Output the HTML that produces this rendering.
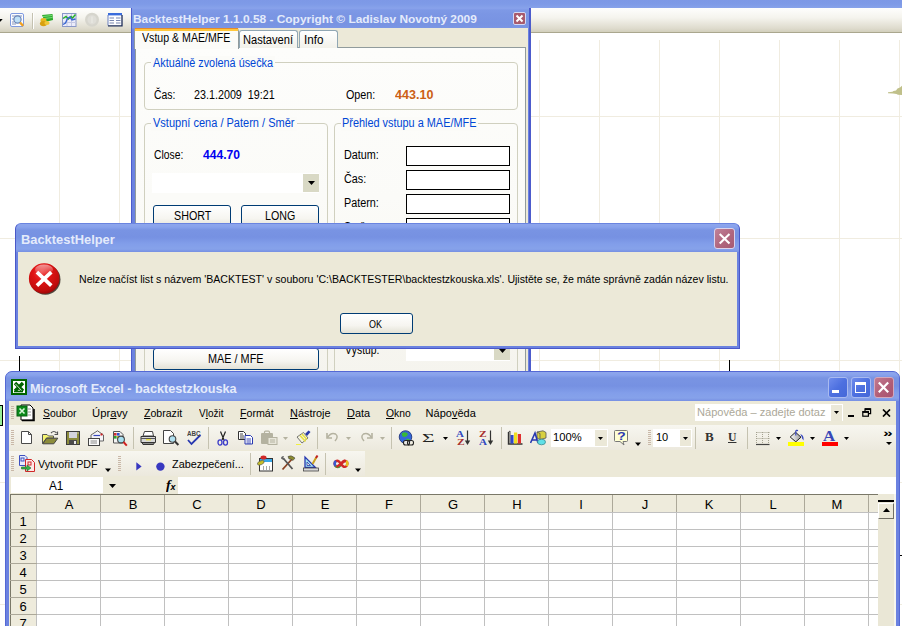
<!DOCTYPE html><html><head><meta charset="utf-8"><title>BacktestHelper</title><style>
html,body{margin:0;padding:0;background:#fff;}
#root{position:relative;width:902px;height:626px;overflow:hidden;background:#fff;}
#root div,#root span,#root svg{position:absolute;box-sizing:border-box;}
.layer{left:0;top:0;width:902px;height:626px;}
span.t{white-space:nowrap;transform-origin:0 0;display:block;}

</style></head><body><div id="root">
<div class="layer" id="L_bg">
<div style="left:0px;top:0px;width:902px;height:8px;background:linear-gradient(#7d98e6,#7e9ae7 50%,#87a2ea)"></div>
<div style="left:0px;top:8px;width:902px;height:25px;background:linear-gradient(#fefefd 0%,#f5f4ee 40%,#dedbcd 85%,#d2cfbc 100%);border-bottom:1px solid #aaa78e"></div>
<div style="left:59px;top:40px;width:1px;height:340px;background:#f0ece0"></div>
<div style="left:119px;top:40px;width:1px;height:340px;background:#f0ece0"></div>
<div style="left:179px;top:40px;width:1px;height:340px;background:#f0ece0"></div>
<div style="left:239px;top:40px;width:1px;height:340px;background:#f0ece0"></div>
<div style="left:299px;top:40px;width:1px;height:340px;background:#f0ece0"></div>
<div style="left:359px;top:40px;width:1px;height:340px;background:#f0ece0"></div>
<div style="left:419px;top:40px;width:1px;height:340px;background:#f0ece0"></div>
<div style="left:479px;top:40px;width:1px;height:340px;background:#f0ece0"></div>
<div style="left:539px;top:40px;width:1px;height:340px;background:#f0ece0"></div>
<div style="left:599px;top:40px;width:1px;height:340px;background:#f0ece0"></div>
<div style="left:659px;top:40px;width:1px;height:340px;background:#f0ece0"></div>
<div style="left:719px;top:40px;width:1px;height:340px;background:#f0ece0"></div>
<div style="left:779px;top:40px;width:1px;height:340px;background:#f0ece0"></div>
<div style="left:839px;top:40px;width:1px;height:340px;background:#f0ece0"></div>
<div style="left:899px;top:40px;width:1px;height:340px;background:#f0ece0"></div>
<div style="left:959px;top:40px;width:1px;height:340px;background:#f0ece0"></div>
<div style="left:0px;top:116px;width:902px;height:1px;background:#f0ece0"></div>
<div style="left:0px;top:238px;width:902px;height:1px;background:#f0ece0"></div>
<div style="left:0px;top:360px;width:902px;height:1px;background:#f0ece0"></div>
<div style="left:0px;top:482px;width:902px;height:1px;background:#f0ece0"></div>
<div style="left:0px;top:604px;width:902px;height:1px;background:#f0ece0"></div>
<div style="left:19px;top:356px;width:1px;height:16px;background:#000"></div>
<div style="left:729px;top:360px;width:1px;height:12px;background:#000"></div>
<div style="left:0px;top:405px;width:3px;height:21px;background:#98f098;border:1px solid #000;border-left:none"></div>
<div style="left:900px;top:555px;width:2px;height:1px;background:#000"></div>
<svg style="left:0px;top:18px" width="4" height="4" viewBox="0 0 4 4"><path d="M0 1H2.6L0.6 3.4H0Z" fill="#000"/></svg>
<svg style="left:10px;top:13px" width="15" height="15" viewBox="0 0 15 15"><rect x="0.5" y="0.5" width="13" height="13" rx="1.5" fill="#fdfdff" stroke="#7f9ae0"/>
<path d="M2 3H12M2 6H4M2 9H4M2 11H6" stroke="#8894b8" stroke-width="1"/>
<circle cx="7.5" cy="6.5" r="3.6" fill="#bfe0f6" stroke="#6a86b8" stroke-width="1.2"/>
<path d="M10 9.5L13.2 12.8" stroke="#f0a020" stroke-width="2.4"/></svg>
<div style="left:32px;top:13px;width:1px;height:16px;background:#c4c1b0"></div>
<div style="left:33px;top:13px;width:1px;height:16px;background:#fff"></div>
<svg style="left:39px;top:13px" width="15" height="15" viewBox="0 0 15 15"><path d="M3 2L13.5 1L14 7L6 9Z" fill="#2aa82a"/><path d="M4 3.5L13 2.5M5 5.5L13.5 4.5" stroke="#7ae07a" stroke-width="1"/>
<ellipse cx="4.5" cy="7.5" rx="3" ry="2.4" fill="#e8b820"/><ellipse cx="4.5" cy="10.6" rx="3.6" ry="2.6" fill="#d8a010"/><ellipse cx="8" cy="10" rx="2.6" ry="2" fill="#f0c838"/></svg>
<svg style="left:62px;top:13px" width="15" height="14" viewBox="0 0 15 14"><rect x="0.5" y="0.5" width="13.5" height="13" fill="#ececfa" stroke="#8a98c8"/>
<path d="M5 1V13M9.5 1V13M1 5H14M1 9.5H14" stroke="#c4c8e4" stroke-width="1"/>
<path d="M1 5.5L4 3.5L6.5 6L9 3.5L10.5 5L13.5 1.5" stroke="#28b028" stroke-width="1.5" fill="none"/>
<path d="M1 11.5L3.5 10L5.5 5.5L8 4L10 7L13.5 6" stroke="#3a68d0" stroke-width="1.4" fill="none"/></svg>
<svg style="left:84px;top:12px" width="16" height="16" viewBox="0 0 16 16"><circle cx="8" cy="7.8" r="7" fill="#d6d5cd"/><circle cx="8" cy="7.8" r="4.6" fill="#dfded8"/><path d="M8 4.5V11" stroke="#e9e8e3" stroke-width="1.4"/></svg>
<svg style="left:107px;top:13px" width="16" height="14" viewBox="0 0 16 14"><rect x="1" y="0.5" width="14" height="12.5" fill="#fdfdff"/><rect x="1" y="0" width="14" height="2.4" fill="#3a6cdc"/>
<path d="M1 2V12.5" stroke="#6a80c0" stroke-width="1" fill="none"/><path d="M1 12.8H15V2" stroke="#1c2c58" stroke-width="1.3" fill="none"/>
<path d="M2.5 5H7M9 5H13.5M2.5 7.5H7M9 7.5H13.5M2.5 10H7M9 10H13.5" stroke="#7a88b0" stroke-width="1.2"/></svg>
<svg style="left:887px;top:85px" width="15" height="11" viewBox="0 0 15 11"><path d="M1 7.3L5.5 6.8L6.5 6L9 5.5L10.5 3.6L13 2.6L15 0.8V10L11 9.8L9.5 9L6 8.6L1 8.2Z" fill="#c0c08a"/></svg>
</div>
<div class="layer" id="L_bth">
<div style="left:131px;top:8px;width:400px;height:372px;background:linear-gradient(#8aa3ec 0px,#7e99e6 2px,#7b96e4 6px,#7893e2 16px,#7b96e4 20px,#6b82e0 21px,#6b82e0 400px);border-left:1px solid #4c5ccc;border-right:2px solid #4c5ccc"></div>
<div style="left:513px;top:12px;width:13px;height:13px;background:#a85a6c;border:1px solid #d4d9f4;border-radius:2px"></div>
<svg style="left:513px;top:12px" width="13" height="13" viewBox="0 0 13 13"><path d="M3.5 3.5L9.5 9.5M9.5 3.5L3.5 9.5" stroke="#fff" stroke-width="2"/></svg>
<div style="left:135px;top:28px;width:393px;height:352px;background:#ece9d8"></div>
<div style="left:135px;top:47px;width:391px;height:340px;background:linear-gradient(#fdfdfb 0px,#fbfbf8 150px,#f5f4ee 325px);border:1px solid #919b9c"></div>
<div style="left:239px;top:30px;width:59px;height:18px;background:linear-gradient(#ffffff,#f2f1ea);border:1px solid #91a7b4;border-bottom:none;border-radius:3px 3px 0 0"></div>
<div style="left:299px;top:30px;width:39px;height:18px;background:linear-gradient(#ffffff,#f2f1ea);border:1px solid #91a7b4;border-bottom:none;border-radius:3px 3px 0 0"></div>
<div style="left:134px;top:28px;width:105px;height:21px;background:#fbfbf8;border:1px solid #919b9c;border-bottom:none;border-top:3px solid #ffc73c;border-radius:3px 3px 0 0"></div>
<div style="left:135px;top:28px;width:103px;height:1px;background:#e68b2c"></div>
<div style="left:144px;top:62px;width:374px;height:48px;border:1px solid #d0d0bf;border-radius:4px"></div>
<div style="left:144px;top:123px;width:184px;height:270px;border:1px solid #d0d0bf;border-radius:4px"></div>
<div style="left:334px;top:123px;width:184px;height:270px;border:1px solid #d0d0bf;border-radius:4px"></div>
<div style="left:151px;top:56px;width:124px;height:14px;background:#fbfbf8"></div>
<div style="left:151px;top:117px;width:146px;height:14px;background:#fbfbf8"></div>
<div style="left:341px;top:117px;width:137px;height:14px;background:#fbfbf8"></div>
<div style="left:152px;top:173px;width:167px;height:20px;background:#fff"></div>
<div style="left:303px;top:174px;width:16px;height:18px;background:#d9d9c5"></div>
<svg style="left:308px;top:181px" width="7" height="4" viewBox="0 0 7 4"><path d="M0 0H7L3.5 4Z" fill="#000"/></svg>
<div style="left:153px;top:205px;width:78px;height:23px;background:linear-gradient(#ffffff 0%,#f6f5f0 60%,#e4e2d6 100%);border:1px solid #003c74;border-radius:3px"></div>
<div style="left:241px;top:205px;width:78px;height:23px;background:linear-gradient(#ffffff 0%,#f6f5f0 60%,#e4e2d6 100%);border:1px solid #003c74;border-radius:3px"></div>
<div style="left:406px;top:146px;width:104px;height:20px;background:#fff;border:1.5px solid #000"></div>
<div style="left:406px;top:170px;width:104px;height:20px;background:#fff;border:1.5px solid #000"></div>
<div style="left:406px;top:194px;width:104px;height:20px;background:#fff;border:1.5px solid #000"></div>
<div style="left:406px;top:218px;width:104px;height:20px;background:#fff;border:1.5px solid #000"></div>
<div style="left:153px;top:348px;width:166px;height:22px;background:linear-gradient(#ffffff 0%,#f6f5f0 60%,#e4e2d6 100%);border:1px solid #003c74;border-radius:3px"></div>
<div style="left:406px;top:341px;width:104px;height:20px;background:#fff"></div>
<div style="left:494px;top:342px;width:16px;height:18px;background:#d9d9c5"></div>
<svg style="left:499px;top:349px" width="7" height="4" viewBox="0 0 7 4"><path d="M0 0H7L3.5 4Z" fill="#000"/></svg>
<span class="t" style='left:132.92px;top:13.50px;font:bold 11px/1 "Liberation Sans", sans-serif;color:#e4ebfb;transform:scaleX(1.0832);'>BacktestHelper 1.1.0.58 - Copyright © Ladislav Novotný 2009</span>
<span class="t" style='left:142.20px;top:31.85px;font:normal 12.3px/1 "Liberation Sans", sans-serif;color:#000;transform:scaleX(0.8627);'>Vstup &amp; MAE/MFE</span>
<span class="t" style='left:242.90px;top:33.85px;font:normal 12.3px/1 "Liberation Sans", sans-serif;color:#000;transform:scaleX(0.9037);'>Nastavení</span>
<span class="t" style='left:304.45px;top:33.85px;font:normal 12.3px/1 "Liberation Sans", sans-serif;color:#000;transform:scaleX(0.9474);'>Info</span>
<span class="t" style='left:153.20px;top:56.85px;font:normal 12.3px/1 "Liberation Sans", sans-serif;color:#0046d5;transform:scaleX(0.8824);'>Aktuálně zvolená úsečka</span>
<span class="t" style='left:153.00px;top:116.85px;font:normal 12.3px/1 "Liberation Sans", sans-serif;color:#0046d5;transform:scaleX(0.8962);'>Vstupní cena / Patern / Směr</span>
<span class="t" style='left:342.31px;top:116.85px;font:normal 12.3px/1 "Liberation Sans", sans-serif;color:#0046d5;transform:scaleX(0.8860);'>Přehled vstupu a MAE/MFE</span>
<span class="t" style='left:153.85px;top:88.85px;font:normal 12.3px/1 "Liberation Sans", sans-serif;color:#000;transform:scaleX(0.8478);'>Čas:</span>
<span class="t" style='left:193.53px;top:88.85px;font:normal 12.3px/1 "Liberation Sans", sans-serif;color:#000;transform:scaleX(0.8747);'>23.1.2009 &nbsp;19:21</span>
<span class="t" style='left:345.73px;top:88.85px;font:normal 12.3px/1 "Liberation Sans", sans-serif;color:#000;transform:scaleX(0.8750);'>Open:</span>
<span class="t" style='left:394.60px;top:88.85px;font:bold 12.3px/1 "Liberation Sans", sans-serif;color:#cc6014;transform:scaleX(1.0216);'>443.10</span>
<span class="t" style='left:153.86px;top:148.85px;font:normal 12.3px/1 "Liberation Sans", sans-serif;color:#000;transform:scaleX(0.8394);'>Close:</span>
<span class="t" style='left:203.20px;top:148.85px;font:bold 12.3px/1 "Liberation Sans", sans-serif;color:#0000f0;transform:scaleX(0.9838);'>444.70</span>
<span class="t" style='left:173.53px;top:209.85px;font:normal 12.3px/1 "Liberation Sans", sans-serif;color:#000;transform:scaleX(0.8714);'>SHORT</span>
<span class="t" style='left:264.93px;top:209.85px;font:normal 12.3px/1 "Liberation Sans", sans-serif;color:#000;transform:scaleX(0.8667);'>LONG</span>
<span class="t" style='left:343.52px;top:148.85px;font:normal 12.3px/1 "Liberation Sans", sans-serif;color:#000;transform:scaleX(0.8789);'>Datum:</span>
<span class="t" style='left:343.52px;top:172.85px;font:normal 12.3px/1 "Liberation Sans", sans-serif;color:#000;transform:scaleX(0.8783);'>Čas:</span>
<span class="t" style='left:343.52px;top:196.85px;font:normal 12.3px/1 "Liberation Sans", sans-serif;color:#000;transform:scaleX(0.8789);'>Patern:</span>
<span class="t" style='left:343.54px;top:220.85px;font:normal 12.3px/1 "Liberation Sans", sans-serif;color:#000;transform:scaleX(0.8581);'>Směr:</span>
<span class="t" style='left:208.32px;top:352.85px;font:normal 12.3px/1 "Liberation Sans", sans-serif;color:#000;transform:scaleX(0.8839);'>MAE / MFE</span>
<span class="t" style='left:344.50px;top:343.85px;font:normal 12.3px/1 "Liberation Sans", sans-serif;color:#000;transform:scaleX(0.8375);'>Výstup:</span>
</div>
<div class="layer" id="L_dlg">
<div style="left:15px;top:223px;width:725px;height:126px;background:#6b82e0;border-radius:6px 6px 0 0;border:1px solid #4a58c8;border-top-color:#6a84e0"></div>
<div style="left:16px;top:224px;width:723px;height:28px;background:linear-gradient(#8ea6ec 0px,#88a2ec 3px,#7994e3 6px,#7691e2 13px,#829eea 20px,#86a2ea 25px,#7790e3 28px);border-radius:5px 5px 0 0"></div>
<div style="left:714px;top:228px;width:21px;height:21px;background:linear-gradient(135deg,#c08298 0%,#b0667e 55%,#a65a72 100%);border:1px solid #dcd4ec;border-radius:3px"></div>
<svg style="left:714px;top:228px" width="21" height="21" viewBox="0 0 21 21"><path d="M5.7 5.9L15.5 15.4M15.5 5.9L5.7 15.4" stroke="#fff" stroke-width="2.1"/></svg>
<div style="left:18px;top:252px;width:719px;height:94px;background:#ece9d8"></div>
<svg style="left:28px;top:262px" width="34" height="35" viewBox="0 0 34 35">
<defs><radialGradient id="rg" cx="0.42" cy="0.3" r="0.8"><stop offset="0" stop-color="#f04848"/><stop offset="0.35" stop-color="#e01414"/><stop offset="0.75" stop-color="#c00c0c"/><stop offset="1" stop-color="#7c0404"/></radialGradient>
<linearGradient id="hl" x1="0" y1="0" x2="0" y2="1"><stop offset="0" stop-color="#fff" stop-opacity="0.55"/><stop offset="1" stop-color="#fff" stop-opacity="0"/></linearGradient></defs>
<circle cx="17.3" cy="17.6" r="15.2" fill="#1a1008" opacity="0.75"/>
<circle cx="16.2" cy="16.5" r="15.3" fill="url(#rg)"/>
<ellipse cx="16" cy="7.5" rx="9" ry="5" fill="url(#hl)"/>
<path d="M8.9 10.1L23.3 23.7M23.3 10.1L8.9 23.7" stroke="#fff" stroke-width="3.7" stroke-linecap="butt"/></svg>
<div style="left:340px;top:313px;width:73px;height:21px;background:linear-gradient(#ffffff 0%,#f6f5f0 60%,#e4e2d6 100%);border:1px solid #003c74;border-radius:3px"></div>
<span class="t" style='left:20.74px;top:232.80px;font:bold 13.4px/1 "Liberation Sans", sans-serif;color:#e4ebfb;transform:scaleX(0.9615);'>BacktestHelper</span>
<span class="t" style='left:78.74px;top:273.50px;font:normal 11px/1 "Liberation Sans", sans-serif;color:#000;transform:scaleX(0.9616);'>Nelze načíst list s názvem 'BACKTEST' v souboru 'C:\BACKTESTER\backtestzkouska.xls'. Ujistěte se, že máte správně zadán název listu.</span>
<span class="t" style='left:369.00px;top:318.50px;font:normal 11px/1 "Liberation Sans", sans-serif;color:#000;transform:scaleX(0.8188);'>OK</span>
</div>
<div class="layer" id="L_xl">
<div style="left:5px;top:371px;width:895px;height:300px;background:#6b82e0;border-radius:7px 7px 0 0;border:1px solid #5468d4"></div>
<div style="left:6px;top:372px;width:893px;height:29px;background:linear-gradient(#8ea6ec 0px,#88a2ec 3px,#7994e3 6px,#7691e2 14px,#829eea 21px,#86a2ea 26px,#7790e3 29px);border-radius:6px 6px 0 0"></div>
<svg style="left:11px;top:379px" width="16" height="16" viewBox="0 0 16 16"><rect width="16" height="16" fill="#006400"/><rect x="2" y="2" width="12" height="12" fill="#fff"/><path d="M4 4L12 12M12 4L4 12" stroke="#006400" stroke-width="3.4"/><path d="M3 12.5H12" stroke="#006400" stroke-width="1.6"/><path d="M4.5 5L10.5 11.5" stroke="#fff" stroke-width="0.8"/></svg>
<div style="left:828px;top:377px;width:20px;height:21px;background:linear-gradient(135deg,#6f8cec 0%,#4d70e0 50%,#4468d8 100%);border:1px solid #a9baf0;border-radius:3px"></div>
<div style="left:851px;top:377px;width:20px;height:21px;background:linear-gradient(135deg,#6f8cec 0%,#4d70e0 50%,#4468d8 100%);border:1px solid #a9baf0;border-radius:3px"></div>
<div style="left:874px;top:377px;width:20px;height:21px;background:linear-gradient(135deg,#c27a90 0%,#b05c76 60%,#a85470 100%);border:1px solid #d4a8bc;border-radius:3px"></div>
<div style="left:832px;top:390px;width:7px;height:3px;background:#fff"></div>
<div style="left:855px;top:382px;width:11px;height:11px;border:1.4px solid #fff;border-top-width:3px"></div>
<svg style="left:874px;top:377px" width="20" height="21" viewBox="0 0 20 21"><path d="M4.8 5.6L14.2 15.2M14.2 5.6L4.8 15.2" stroke="#fff" stroke-width="2.2"/></svg>
<div style="left:9px;top:401px;width:887px;height:300px;background:#ece9d8"></div>
<div style="left:695px;top:404px;width:148px;height:17px;background:#fff"></div>
<div style="left:831px;top:405px;width:11px;height:16px;background:#ebe8d8"></div>
<svg style="left:834px;top:411px" width="5" height="3" viewBox="0 0 5 3"><path d="M0 0H5L2.5 3Z" fill="#000"/></svg>
<div style="left:9px;top:425px;width:887px;height:25px;background:linear-gradient(#f7f6f0,#ece9dd)"></div>
<div style="left:9px;top:451px;width:356px;height:25px;background:linear-gradient(#f7f6f0,#ece9dd)"></div>
<div style="left:551px;top:429px;width:57px;height:18px;background:#fff"></div>
<div style="left:595px;top:430px;width:12px;height:16px;background:#ebe8d8"></div>
<div style="left:653px;top:429px;width:39px;height:18px;background:#fff"></div>
<div style="left:680px;top:430px;width:11px;height:16px;background:#ebe8d8"></div>
<svg style="left:598px;top:437px" width="5" height="3" viewBox="0 0 5 3"><path d="M0 0H5L2.5 3Z" fill="#000"/></svg>
<svg style="left:683px;top:437px" width="5" height="3" viewBox="0 0 5 3"><path d="M0 0H5L2.5 3Z" fill="#000"/></svg>
<div style="left:11px;top:477px;width:92px;height:16px;background:#fff"></div>
<div style="left:178px;top:477px;width:718px;height:17px;background:#fff"></div>
<svg style="left:109px;top:484px" width="7" height="4" viewBox="0 0 7 4"><path d="M0 0H7L3.5 4Z" fill="#000"/></svg>
<div style="left:10px;top:494px;width:886px;height:140px;background:#fff;border-left:1px solid #7a7868"></div>
<div style="left:10px;top:494px;width:884px;height:1px;background:#7a7868"></div>
<div style="left:10px;top:494px;width:868px;height:19px;background:#eeebdc;border-top:1.4px solid #7a7868;border-bottom:1px solid #aca899;border-left:1px solid #7a7868"></div>
<div style="left:10px;top:495px;width:27px;height:140px;background:#eeebdc;border-right:1px solid #aca899;border-left:1px solid #7a7868"></div>
<div style="left:36px;top:495px;width:1px;height:140px;background:#c0c0c0"></div>
<div style="left:36px;top:495px;width:1px;height:17px;background:#aca899"></div>
<div style="left:100px;top:495px;width:1px;height:140px;background:#c0c0c0"></div>
<div style="left:100px;top:495px;width:1px;height:17px;background:#aca899"></div>
<div style="left:164px;top:495px;width:1px;height:140px;background:#c0c0c0"></div>
<div style="left:164px;top:495px;width:1px;height:17px;background:#aca899"></div>
<div style="left:228px;top:495px;width:1px;height:140px;background:#c0c0c0"></div>
<div style="left:228px;top:495px;width:1px;height:17px;background:#aca899"></div>
<div style="left:292px;top:495px;width:1px;height:140px;background:#c0c0c0"></div>
<div style="left:292px;top:495px;width:1px;height:17px;background:#aca899"></div>
<div style="left:356px;top:495px;width:1px;height:140px;background:#c0c0c0"></div>
<div style="left:356px;top:495px;width:1px;height:17px;background:#aca899"></div>
<div style="left:420px;top:495px;width:1px;height:140px;background:#c0c0c0"></div>
<div style="left:420px;top:495px;width:1px;height:17px;background:#aca899"></div>
<div style="left:484px;top:495px;width:1px;height:140px;background:#c0c0c0"></div>
<div style="left:484px;top:495px;width:1px;height:17px;background:#aca899"></div>
<div style="left:548px;top:495px;width:1px;height:140px;background:#c0c0c0"></div>
<div style="left:548px;top:495px;width:1px;height:17px;background:#aca899"></div>
<div style="left:612px;top:495px;width:1px;height:140px;background:#c0c0c0"></div>
<div style="left:612px;top:495px;width:1px;height:17px;background:#aca899"></div>
<div style="left:676px;top:495px;width:1px;height:140px;background:#c0c0c0"></div>
<div style="left:676px;top:495px;width:1px;height:17px;background:#aca899"></div>
<div style="left:740px;top:495px;width:1px;height:140px;background:#c0c0c0"></div>
<div style="left:740px;top:495px;width:1px;height:17px;background:#aca899"></div>
<div style="left:804px;top:495px;width:1px;height:140px;background:#c0c0c0"></div>
<div style="left:804px;top:495px;width:1px;height:17px;background:#aca899"></div>
<div style="left:868px;top:495px;width:1px;height:140px;background:#c0c0c0"></div>
<div style="left:868px;top:495px;width:1px;height:17px;background:#aca899"></div>
<div style="left:10px;top:512px;width:868px;height:1px;background:#c0c0c0"></div>
<div style="left:10px;top:512px;width:27px;height:1px;background:#aca899"></div>
<div style="left:10px;top:529px;width:868px;height:1px;background:#c0c0c0"></div>
<div style="left:10px;top:529px;width:27px;height:1px;background:#aca899"></div>
<div style="left:10px;top:546px;width:868px;height:1px;background:#c0c0c0"></div>
<div style="left:10px;top:546px;width:27px;height:1px;background:#aca899"></div>
<div style="left:10px;top:563px;width:868px;height:1px;background:#c0c0c0"></div>
<div style="left:10px;top:563px;width:27px;height:1px;background:#aca899"></div>
<div style="left:10px;top:580px;width:868px;height:1px;background:#c0c0c0"></div>
<div style="left:10px;top:580px;width:27px;height:1px;background:#aca899"></div>
<div style="left:10px;top:597px;width:868px;height:1px;background:#c0c0c0"></div>
<div style="left:10px;top:597px;width:27px;height:1px;background:#aca899"></div>
<div style="left:10px;top:614px;width:868px;height:1px;background:#c0c0c0"></div>
<div style="left:10px;top:614px;width:27px;height:1px;background:#aca899"></div>
<div style="left:10px;top:631px;width:868px;height:1px;background:#c0c0c0"></div>
<div style="left:10px;top:631px;width:27px;height:1px;background:#aca899"></div>
<div style="left:878px;top:494px;width:18px;height:140px;background:#ece9d8"></div>
<div style="left:878px;top:500px;width:16px;height:2px;background:#000"></div>
<div style="left:878px;top:503px;width:16px;height:16px;background:#ece9d8;border:1px solid #fff;border-right-color:#716f64;border-bottom-color:#716f64"></div>
<svg style="left:883px;top:508px" width="7" height="4" viewBox="0 0 7 4"><path d="M0 4H7L3.5 0Z" fill="#000"/></svg>
<div style="left:878px;top:520px;width:17px;height:120px;background:#eae7d6"></div>
<div style="left:894px;top:494px;width:2px;height:140px;background:#f6f5ee"></div>
<svg style="left:11px;top:406px" width="3" height="14" viewBox="0 0 3 14"><rect x="0" y="0" width="3" height="1" fill="#c9b8a8"/><rect x="0" y="2" width="3" height="1" fill="#c9b8a8"/><rect x="0" y="4" width="3" height="1" fill="#c9b8a8"/><rect x="0" y="6" width="3" height="1" fill="#c9b8a8"/><rect x="0" y="8" width="3" height="1" fill="#c9b8a8"/><rect x="0" y="10" width="3" height="1" fill="#c9b8a8"/><rect x="0" y="12" width="3" height="1" fill="#c9b8a8"/></svg>
<svg style="left:11px;top:430px" width="3" height="16" viewBox="0 0 3 16"><rect x="0" y="0" width="3" height="1" fill="#c9b8a8"/><rect x="0" y="2" width="3" height="1" fill="#c9b8a8"/><rect x="0" y="4" width="3" height="1" fill="#c9b8a8"/><rect x="0" y="6" width="3" height="1" fill="#c9b8a8"/><rect x="0" y="8" width="3" height="1" fill="#c9b8a8"/><rect x="0" y="10" width="3" height="1" fill="#c9b8a8"/><rect x="0" y="12" width="3" height="1" fill="#c9b8a8"/><rect x="0" y="14" width="3" height="1" fill="#c9b8a8"/></svg>
<svg style="left:11px;top:456px" width="3" height="16" viewBox="0 0 3 16"><rect x="0" y="0" width="3" height="1" fill="#c9b8a8"/><rect x="0" y="2" width="3" height="1" fill="#c9b8a8"/><rect x="0" y="4" width="3" height="1" fill="#c9b8a8"/><rect x="0" y="6" width="3" height="1" fill="#c9b8a8"/><rect x="0" y="8" width="3" height="1" fill="#c9b8a8"/><rect x="0" y="10" width="3" height="1" fill="#c9b8a8"/><rect x="0" y="12" width="3" height="1" fill="#c9b8a8"/><rect x="0" y="14" width="3" height="1" fill="#c9b8a8"/></svg>
<svg style="left:118px;top:456px" width="3" height="16" viewBox="0 0 3 16"><rect x="0" y="0" width="3" height="1" fill="#c9b8a8"/><rect x="0" y="2" width="3" height="1" fill="#c9b8a8"/><rect x="0" y="4" width="3" height="1" fill="#c9b8a8"/><rect x="0" y="6" width="3" height="1" fill="#c9b8a8"/><rect x="0" y="8" width="3" height="1" fill="#c9b8a8"/><rect x="0" y="10" width="3" height="1" fill="#c9b8a8"/><rect x="0" y="12" width="3" height="1" fill="#c9b8a8"/><rect x="0" y="14" width="3" height="1" fill="#c9b8a8"/></svg>
<svg style="left:648px;top:430px" width="3" height="16" viewBox="0 0 3 16"><rect x="0" y="0" width="3" height="1" fill="#c9b8a8"/><rect x="0" y="2" width="3" height="1" fill="#c9b8a8"/><rect x="0" y="4" width="3" height="1" fill="#c9b8a8"/><rect x="0" y="6" width="3" height="1" fill="#c9b8a8"/><rect x="0" y="8" width="3" height="1" fill="#c9b8a8"/><rect x="0" y="10" width="3" height="1" fill="#c9b8a8"/><rect x="0" y="12" width="3" height="1" fill="#c9b8a8"/><rect x="0" y="14" width="3" height="1" fill="#c9b8a8"/></svg>
<div style="left:133px;top:427px;width:1px;height:22px;background:#c5c2b0"></div>
<div style="left:208px;top:427px;width:1px;height:22px;background:#c5c2b0"></div>
<div style="left:317px;top:427px;width:1px;height:22px;background:#c5c2b0"></div>
<div style="left:391px;top:427px;width:1px;height:22px;background:#c5c2b0"></div>
<div style="left:501px;top:427px;width:1px;height:22px;background:#c5c2b0"></div>
<div style="left:695px;top:427px;width:1px;height:22px;background:#c5c2b0"></div>
<div style="left:747px;top:427px;width:1px;height:22px;background:#c5c2b0"></div>
<div style="left:250px;top:453px;width:1px;height:22px;background:#c5c2b0"></div>
<div style="left:325px;top:453px;width:1px;height:22px;background:#c5c2b0"></div>
<svg style="left:16px;top:404px" width="19" height="18" viewBox="0 0 19 18"><path d="M5 1H14L17 4V16H5Z" fill="#fff" stroke="#000" stroke-width="1"/><path d="M6 16.5H18V5" stroke="#000" stroke-width="1.6" fill="none"/>
<path d="M12 5H15M12 8H15M12 11H15" stroke="#999" stroke-width="1"/>
<rect x="1" y="2" width="10" height="10" fill="#0a8a1a" stroke="#066010"/><path d="M3.5 4.5L8.5 9.5M8.5 4.5L3.5 9.5" stroke="#d8f4d8" stroke-width="1.6"/></svg>
<svg style="left:21px;top:431px" width="12" height="14" viewBox="0 0 12 14"><path d="M0.5 0.5H7.5L10.5 3.5V12.5H0.5Z" fill="#fff" stroke="#4a4a4a"/><path d="M7.5 0.5V3.5H10.5" fill="none" stroke="#4a4a4a"/></svg>
<svg style="left:42px;top:430px" width="17" height="15" viewBox="0 0 17 15"><path d="M9 3Q12 0 14.5 3" stroke="#555" fill="none" stroke-width="1.2"/><path d="M15.5 1.5V4.5H12.5" stroke="#555" fill="none" stroke-width="1.2"/>
<path d="M0.5 4.5H5L6.5 6H11.5V8H4.5L0.5 13.5Z" fill="#f4f470" stroke="#555"/><path d="M0.8 13.8L4.6 8.2H15.8L11.8 13.8Z" fill="#8c8c3c" stroke="#444"/></svg>
<svg style="left:66px;top:431px" width="14" height="14" viewBox="0 0 14 14"><rect x="0.5" y="0.5" width="13" height="13" fill="#8c8c3c" stroke="#3c3c3c"/><rect x="3" y="1" width="8" height="6" fill="#d4d4dc"/>
<rect x="3" y="9" width="8" height="4.5" fill="#4a4a4a"/><rect x="8" y="10" width="2" height="3" fill="#e8e8e8"/><rect x="11.5" y="1.5" width="1" height="1" fill="#fff"/></svg>
<svg style="left:88px;top:430px" width="17" height="16" viewBox="0 0 17 16"><path d="M3 5L9.5 0.8L15.5 5V11H3Z" fill="#f4f4f8" stroke="#666"/><path d="M5.5 5.5H12" stroke="#3848c0" stroke-width="1.2"/><rect x="12.5" y="3.5" width="2" height="2" fill="#d02020"/>
<rect x="0.5" y="8.5" width="11" height="7" fill="#fbfbfb" stroke="#444"/><path d="M2.5 11H9M2.5 13H9" stroke="#888" stroke-width="1"/></svg>
<svg style="left:112px;top:431px" width="16" height="16" viewBox="0 0 16 16"><path d="M1.5 0.5H8L11 3.5V12H1.5Z" fill="#f4f4f4" stroke="#555"/><rect x="2" y="2" width="2.6" height="2.6" fill="#d03030"/><rect x="5" y="2" width="2.6" height="2.6" fill="#3050d0"/><rect x="2" y="5" width="2.6" height="2.6" fill="#30a030"/><rect x="5" y="5" width="2.6" height="2.6" fill="#e0c020"/>
<circle cx="9" cy="8.5" r="3.4" fill="#a8e0f0" stroke="#444" stroke-width="1.1"/><path d="M11.5 11L14.8 14.6" stroke="#d02020" stroke-width="2"/></svg>
<svg style="left:140px;top:431px" width="17" height="14" viewBox="0 0 17 14"><path d="M4.5 0.5H12.5L13.5 5H3Z" fill="#fff" stroke="#444"/><path d="M1 5.5H15.5V11.5H1Z" fill="#d8d8d8" stroke="#333"/><path d="M2 11.5H14.5L13.5 13.5H3Z" fill="#888" stroke="#333"/><rect x="6" y="8" width="5" height="1.4" fill="#e8e040"/><path d="M1 7.5H15.5" stroke="#555"/></svg>
<svg style="left:163px;top:430px" width="17" height="16" viewBox="0 0 17 16"><path d="M0.5 0.5H7.5L10.5 3.5V13.5H0.5Z" fill="#fff" stroke="#444"/><circle cx="9.5" cy="9" r="3.3" fill="#b0e0f0" stroke="#444" stroke-width="1.1"/><path d="M12 11.5L15.4 15" stroke="#333" stroke-width="2"/></svg>
<svg style="left:186px;top:434px" width="16" height="12" viewBox="0 0 16 12"><path d="M2 6L5.5 10L14.5 1" stroke="#2838b0" stroke-width="1.8" fill="none"/></svg>
<svg style="left:217px;top:431px" width="12" height="15" viewBox="0 0 12 15"><path d="M3.5 0.5L7 9M8.5 0.5L5 9" stroke="#222" stroke-width="1.2"/><ellipse cx="3" cy="11.5" rx="2" ry="2.6" fill="none" stroke="#3a3ac8" stroke-width="1.3"/><ellipse cx="8.5" cy="11.5" rx="2" ry="2.6" fill="none" stroke="#3a3ac8" stroke-width="1.3"/></svg>
<svg style="left:238px;top:431px" width="16" height="14" viewBox="0 0 16 14"><path d="M0.5 0.5H5.5L7.5 2.5V8.5H0.5Z" fill="#fff" stroke="#333"/><path d="M2 3H5M2 5H6M2 7H6" stroke="#333" stroke-width="0.9"/>
<path d="M7 4.5H12.5L14.5 6.5V13H7Z" fill="#fff" stroke="#2838b0"/><path d="M8.5 8H13M8.5 10H13M8.5 12H13" stroke="#2838b0" stroke-width="0.9"/></svg>
<svg style="left:260px;top:430px" width="18" height="15" viewBox="0 0 18 15"><rect x="1" y="3" width="12" height="11" rx="1" fill="#b4b2a0"/><rect x="4.5" y="1.2" width="5" height="3" rx="1" fill="none" stroke="#b4b2a0" stroke-width="1.2"/>
<rect x="8" y="7.5" width="9" height="7" fill="#e8e6da" stroke="#b4b2a0"/><path d="M10 10H15M10 12H15" stroke="#b4b2a0"/></svg>
<svg style="left:283px;top:437px" width="5" height="3" viewBox="0 0 5 3"><path d="M0 0H5L2.5 3Z" fill="#b4b2a0"/></svg>
<svg style="left:295px;top:429px" width="17" height="17" viewBox="0 0 17 17"><path d="M10 5L13.5 1.5L15.5 3L12 7Z" fill="#2838a8"/><path d="M2 8L8.5 3.5L13 9L7 14Z" fill="#f4f4e0" stroke="#555" stroke-width="0.8"/><path d="M5 6.5L10.5 12.5M7 5L12 10.5" stroke="#e8e040" stroke-width="1.6"/><path d="M1 15.5H6" stroke="#f0f040" stroke-width="1"/></svg>
<svg style="left:325px;top:431px" width="16" height="12" viewBox="0 0 16 12"><path d="M2 2V7H7" fill="none" stroke="#b4b2a0" stroke-width="1.6"/><path d="M2.5 6.5Q6 1 10.5 3Q14 5.5 10 10" fill="none" stroke="#b4b2a0" stroke-width="1.5"/></svg>
<svg style="left:346px;top:437px" width="5" height="3" viewBox="0 0 5 3"><path d="M0 0H5L2.5 3Z" fill="#b4b2a0"/></svg>
<svg style="left:358px;top:431px" width="16" height="12" viewBox="0 0 16 12"><path d="M14 2V7H9" fill="none" stroke="#b4b2a0" stroke-width="1.6"/><path d="M13.5 6.5Q10 1 5.5 3Q2 5.5 6 10" fill="none" stroke="#b4b2a0" stroke-width="1.5"/></svg>
<svg style="left:380px;top:437px" width="5" height="3" viewBox="0 0 5 3"><path d="M0 0H5L2.5 3Z" fill="#b4b2a0"/></svg>
<svg style="left:398px;top:430px" width="17" height="17" viewBox="0 0 17 17"><circle cx="7.5" cy="7" r="6.3" fill="#3468d8" stroke="#1c2c70" stroke-width="0.8"/><path d="M4 3Q8 1 10 4Q9 7 6 7Q3 6 4 3Z" fill="#38b838"/><path d="M8 9Q11 8 12 10L10 12Z" fill="#38b838"/>
<rect x="5.5" y="10.5" width="6" height="4.5" rx="2" fill="#e8e8e8" stroke="#222" stroke-width="1.1"/><rect x="9.5" y="10.5" width="6" height="4.5" rx="2" fill="none" stroke="#222" stroke-width="1.1"/></svg>
<svg style="left:443px;top:437px" width="5" height="3" viewBox="0 0 5 3"><path d="M0 0H5L2.5 3Z" fill="#000"/></svg>
<svg style="left:464px;top:430px" width="8" height="16" viewBox="0 0 8 16"><path d="M3.5 0.5V12" stroke="#333" stroke-width="1.2"/><path d="M0.8 10.5H6.2L3.5 15Z" fill="#333"/></svg>
<svg style="left:487px;top:430px" width="8" height="16" viewBox="0 0 8 16"><path d="M3.5 0.5V12" stroke="#333" stroke-width="1.2"/><path d="M0.8 10.5H6.2L3.5 15Z" fill="#333"/></svg>
<svg style="left:507px;top:430px" width="17" height="16" viewBox="0 0 17 16"><path d="M1.5 2V14H15.5" fill="none" stroke="#333" stroke-width="1.4"/><path d="M1.5 2L3 1V13" fill="none" stroke="#333" stroke-width="0.8"/>
<rect x="3.5" y="5" width="3" height="8.5" fill="#3048c8"/><rect x="7" y="2.5" width="3.2" height="11" fill="#f0e020"/><rect x="10.8" y="4" width="3.2" height="9.5" fill="#e03030"/></svg>
<svg style="left:530px;top:430px" width="17" height="16" viewBox="0 0 17 16"><path d="M7 2L13 0.8L16 2.5V8L10 9.5L7 8Z" fill="#d8d040" stroke="#555" stroke-width="0.8"/><path d="M7 2L10 3.5V9.5" fill="none" stroke="#555" stroke-width="0.8"/>
<path d="M0.5 13L5 3L8 13M2 10H7" fill="none" stroke="#2838b0" stroke-width="1.6"/><ellipse cx="11.5" cy="12" rx="4" ry="2.8" fill="#60e0e8" stroke="#3a8a90" stroke-width="0.8"/></svg>
<svg style="left:614px;top:430px" width="15" height="17" viewBox="0 0 15 17"><path d="M1.5 0.5H12.5Q13.5 0.5 13.5 1.5V10.5Q13.5 11.5 12.5 11.5H9L10 15L6 11.5H1.5Q0.5 11.5 0.5 10.5V1.5Q0.5 0.5 1.5 0.5Z" fill="#ffffd4" stroke="#777"/></svg>
<svg style="left:635px;top:442px" width="6" height="4" viewBox="0 0 6 4"><path d="M0 0.5H6L3 4Z" fill="#000"/></svg>
<svg style="left:105px;top:467.5px" width="6" height="4" viewBox="0 0 6 4"><path d="M0 0.5H6L3 4Z" fill="#000"/></svg>
<svg style="left:355px;top:467.5px" width="6" height="4" viewBox="0 0 6 4"><path d="M0 0.5H6L3 4Z" fill="#000"/></svg>
<svg style="left:756px;top:431px" width="14" height="15" viewBox="0 0 14 15"><path d="M0.5 1.5H13.5M0.5 7.5H13.5M0.5 1V12M6.5 1V12M12.5 1V12" stroke="#a4a290" stroke-width="1" stroke-dasharray="1 1"/><path d="M0 13.5H13.5" stroke="#444" stroke-width="1.2"/></svg>
<svg style="left:776px;top:437px" width="5" height="3" viewBox="0 0 5 3"><path d="M0 0H5L2.5 3Z" fill="#000"/></svg>
<svg style="left:788px;top:429px" width="17" height="18" viewBox="0 0 17 18"><defs><linearGradient id="bk" x1="0" y1="0" x2="1" y2="0"><stop offset="0" stop-color="#fff"/><stop offset="1" stop-color="#9a9a9a"/></linearGradient></defs>
<path d="M2.2 8L7.5 3.2L13 8.2L7.8 12.8Z" fill="url(#bk)" stroke="#222" stroke-width="1"/><path d="M7.8 6.5V2.5Q8 0.8 10 1.6" fill="none" stroke="#3848c0" stroke-width="1.2"/>
<path d="M12.2 5.2Q16 5.5 15.6 11.4Q13.6 9.6 13.6 7.6Z" fill="#3848c0"/>
<rect x="0" y="13" width="16" height="4" fill="#ffff00"/></svg>
<svg style="left:810px;top:437px" width="5" height="3" viewBox="0 0 5 3"><path d="M0 0H5L2.5 3Z" fill="#000"/></svg>
<div style="left:822px;top:442px;width:16px;height:4px;background:#ff0000"></div>
<svg style="left:844px;top:437px" width="5" height="3" viewBox="0 0 5 3"><path d="M0 0H5L2.5 3Z" fill="#000"/></svg>
<svg style="left:886px;top:442px" width="6" height="3" viewBox="0 0 6 3"><path d="M0 0H6L3.0 3Z" fill="#000"/></svg>
<div style="left:848px;top:415px;width:6px;height:2px;background:#000"></div>
<svg style="left:862px;top:408px" width="10" height="9" viewBox="0 0 10 9"><path d="M3 3V0.8H8.6V5.6H6.6" fill="none" stroke="#000" stroke-width="1.2"/><path d="M3 1.2H8.6" stroke="#000" stroke-width="1.8"/><rect x="0.8" y="3.6" width="5.6" height="4.6" fill="none" stroke="#000" stroke-width="1.2"/><path d="M0.8 4H6.4" stroke="#000" stroke-width="1.8"/></svg>
<svg style="left:882px;top:409px" width="9" height="8" viewBox="0 0 9 8"><path d="M1 0.5L8 7.5M8 0.5L1 7.5" stroke="#000" stroke-width="1.7"/></svg>
<svg style="left:19px;top:455px" width="17" height="18" viewBox="0 0 17 18"><path d="M0.5 0.5H6L8 2.5V10.5H0.5Z" fill="#e8ecfc" stroke="#3c50c0"/><rect x="2" y="3" width="3" height="3" fill="none" stroke="#3c50c0"/>
<path d="M6.5 4.5H12.5L15.5 7.5V16.5H6.5Z" fill="#fde8e8" stroke="#d02828"/><rect x="9" y="7" width="3" height="3" fill="none" stroke="#d02828"/>
<path d="M2.5 12H8V10L12 13L8 16V14H2.5Z" fill="#38b048" stroke="#1c7028" stroke-width="0.6"/></svg>
<svg style="left:136px;top:462px" width="6" height="9" viewBox="0 0 6 9"><path d="M0.3 0.3L5.6 4.4L0.3 8.6Z" fill="#3838c0"/></svg>
<svg style="left:156px;top:462px" width="9" height="9" viewBox="0 0 9 9"><circle cx="4.4" cy="4.6" r="4.2" fill="#3838c0"/></svg>
<svg style="left:257px;top:455px" width="17" height="17" viewBox="0 0 17 17"><rect x="2.5" y="3.5" width="13" height="12.5" fill="#fff" stroke="#333"/><rect x="3" y="4" width="12" height="3" fill="#38a8e8"/><ellipse cx="6.5" cy="2.5" rx="3" ry="2" fill="#d02828"/><ellipse cx="3.8" cy="7.8" rx="3.6" ry="1.9" fill="#c8c028" stroke="#555" stroke-width="0.6" transform="rotate(-25 3.8 7.8)"/>
<path d="M6 12H7M9 12H10M12 12H13M6 14H7M9 14H10M12 14H13" stroke="#555"/></svg>
<svg style="left:280px;top:455px" width="17" height="17" viewBox="0 0 17 17"><path d="M2.5 14.5L12.5 3.5" stroke="#884020" stroke-width="1.8"/><path d="M8 1.5Q11 -0.5 15 3L13 5.5Q11 3.5 9 4Z" fill="#8c8c30" stroke="#444" stroke-width="0.6"/><path d="M3 3L12.5 14" stroke="#555" stroke-width="1.8"/><path d="M1 3.5Q1 0.8 4 1L3 3L5 4Q4 6 1 3.5Z" fill="#666"/></svg>
<svg style="left:303px;top:455px" width="17" height="17" viewBox="0 0 17 17"><path d="M2 2V12.5H12.5Z" fill="#a8e8f0" stroke="#2838b0" stroke-width="1.3"/><path d="M4 7V10.5H7.5Z" fill="#ece9d8" stroke="#2838b0" stroke-width="0.8"/><rect x="0.5" y="13" width="15" height="3" fill="#d8d8d8" stroke="#444" stroke-width="0.8"/>
<path d="M9.5 9L13.5 2" stroke="#c8a020" stroke-width="2"/><path d="M13 3L14.5 0.5" stroke="#c02020" stroke-width="2"/></svg>
<svg style="left:333px;top:459px" width="17" height="11" viewBox="0 0 17 11"><path d="M8 5Q5.5 0.8 3 2Q0.5 4 2.5 7Q5 9.5 8 5Q10.5 0.8 13 2Q15.5 4 13.5 7Q11 9.5 8 5Z" fill="none" stroke="#d02828" stroke-width="2.4"/>
<path d="M3 2Q0.5 4 2.5 7" fill="none" stroke="#3858d0" stroke-width="2.4"/><path d="M13 2Q15.5 4 13.5 7" fill="none" stroke="#e8c020" stroke-width="2.4"/><path d="M2.5 7Q5 9.5 7 6.5" fill="none" stroke="#38a838" stroke-width="2.4"/><path d="M3.5 8L12.5 1.5" stroke="#d02828" stroke-width="2.2"/></svg>
<span class="t" style='left:30.02px;top:382.00px;font:bold 13px/1 "Liberation Sans", sans-serif;color:#e4ebfb;transform:scaleX(0.9763);'>Microsoft Excel - backtestzkouska</span>
<span class="t" style='left:43.00px;top:407.50px;font:normal 11px/1 "Liberation Sans", sans-serif;color:#000;transform:scaleX(0.9429);'><u>S</u>oubor</span>
<span class="t" style='left:91.58px;top:407.50px;font:normal 11px/1 "Liberation Sans", sans-serif;color:#000;transform:scaleX(1.0235);'>Úpr<u>a</u>vy</span>
<span class="t" style='left:144.00px;top:407.50px;font:normal 11px/1 "Liberation Sans", sans-serif;color:#000;transform:scaleX(0.9600);'><u>Z</u>obrazit</span>
<span class="t" style='left:199.00px;top:407.50px;font:normal 11px/1 "Liberation Sans", sans-serif;color:#000;transform:scaleX(0.9074);'>V<u>l</u>ožit</span>
<span class="t" style='left:239.50px;top:407.50px;font:normal 11px/1 "Liberation Sans", sans-serif;color:#000;transform:scaleX(0.9686);'><u>F</u>ormát</span>
<span class="t" style='left:290.00px;top:407.50px;font:normal 11px/1 "Liberation Sans", sans-serif;color:#000;transform:scaleX(0.9902);'><u>N</u>ástroje</span>
<span class="t" style='left:346.60px;top:407.50px;font:normal 11px/1 "Liberation Sans", sans-serif;color:#000;transform:scaleX(0.9913);'><u>D</u>ata</span>
<span class="t" style='left:386.00px;top:407.50px;font:normal 11px/1 "Liberation Sans", sans-serif;color:#000;transform:scaleX(0.9385);'><u>O</u>kno</span>
<span class="t" style='left:425.60px;top:407.50px;font:normal 11px/1 "Liberation Sans", sans-serif;color:#000;transform:scaleX(1.0000);'>Nápo<u>v</u>ěda</span>
<span class="t" style='left:696.79px;top:406.50px;font:normal 11px/1 "Liberation Sans", sans-serif;color:#aca899;transform:scaleX(1.0056);'>Nápověda – zadejte dotaz</span>
<span class="t" style='left:37.80px;top:458.50px;font:normal 11px/1 "Liberation Sans", sans-serif;color:#000;transform:scaleX(0.9705);'>Vytvořit PDF</span>
<span class="t" style='left:172.00px;top:458.50px;font:normal 11px/1 "Liberation Sans", sans-serif;color:#000;transform:scaleX(0.9861);'>Zabezpečení...</span>
<span class="t" style='left:553.48px;top:431.50px;font:normal 11px/1 "Liberation Sans", sans-serif;color:#000;transform:scaleX(1.0185);'>100%</span>
<span class="t" style='left:656.00px;top:431.50px;font:normal 11px/1 "Liberation Sans", sans-serif;color:#000;transform:scaleX(1.0000);'>10</span>
<span class="t" style='left:705.00px;top:430.00px;font:bold 13px/1 "Liberation Serif", serif;color:#333;transform:scaleX(1.0000);'>B</span>
<span class="t" style='left:728.00px;top:430.00px;font:bold 13px/1 "Liberation Serif", serif;color:#333;transform:scaleX(0.9000);'><u>U</u></span>
<span class="t" style='left:49.00px;top:479.00px;font:normal 13px/1 "Liberation Sans", sans-serif;color:#000;transform:scaleX(0.9062);'>A1</span>
<span class="t" style='left:165.50px;top:478.00px;font:bold 13px/1 "Liberation Serif", serif;color:#000;transform:scaleX(1.1000);'><i>f</i></span>
<span class="t" style='left:59.00px;top:498.00px;font:normal 13px/1 "Liberation Sans", sans-serif;color:#000;width:20px;text-align:center;'>A</span>
<span class="t" style='left:123.00px;top:498.00px;font:normal 13px/1 "Liberation Sans", sans-serif;color:#000;width:20px;text-align:center;'>B</span>
<span class="t" style='left:187.00px;top:498.00px;font:normal 13px/1 "Liberation Sans", sans-serif;color:#000;width:20px;text-align:center;'>C</span>
<span class="t" style='left:251.00px;top:498.00px;font:normal 13px/1 "Liberation Sans", sans-serif;color:#000;width:20px;text-align:center;'>D</span>
<span class="t" style='left:315.00px;top:498.00px;font:normal 13px/1 "Liberation Sans", sans-serif;color:#000;width:20px;text-align:center;'>E</span>
<span class="t" style='left:379.00px;top:498.00px;font:normal 13px/1 "Liberation Sans", sans-serif;color:#000;width:20px;text-align:center;'>F</span>
<span class="t" style='left:443.00px;top:498.00px;font:normal 13px/1 "Liberation Sans", sans-serif;color:#000;width:20px;text-align:center;'>G</span>
<span class="t" style='left:507.00px;top:498.00px;font:normal 13px/1 "Liberation Sans", sans-serif;color:#000;width:20px;text-align:center;'>H</span>
<span class="t" style='left:571.00px;top:498.00px;font:normal 13px/1 "Liberation Sans", sans-serif;color:#000;width:20px;text-align:center;'>I</span>
<span class="t" style='left:635.00px;top:498.00px;font:normal 13px/1 "Liberation Sans", sans-serif;color:#000;width:20px;text-align:center;'>J</span>
<span class="t" style='left:699.00px;top:498.00px;font:normal 13px/1 "Liberation Sans", sans-serif;color:#000;width:20px;text-align:center;'>K</span>
<span class="t" style='left:763.00px;top:498.00px;font:normal 13px/1 "Liberation Sans", sans-serif;color:#000;width:20px;text-align:center;'>L</span>
<span class="t" style='left:827.00px;top:498.00px;font:normal 13px/1 "Liberation Sans", sans-serif;color:#000;width:20px;text-align:center;'>M</span>
<span class="t" style='left:13.00px;top:515.00px;font:normal 13px/1 "Liberation Sans", sans-serif;color:#000;width:20px;text-align:center;'>1</span>
<span class="t" style='left:13.00px;top:532.00px;font:normal 13px/1 "Liberation Sans", sans-serif;color:#000;width:20px;text-align:center;'>2</span>
<span class="t" style='left:13.00px;top:549.00px;font:normal 13px/1 "Liberation Sans", sans-serif;color:#000;width:20px;text-align:center;'>3</span>
<span class="t" style='left:13.00px;top:566.00px;font:normal 13px/1 "Liberation Sans", sans-serif;color:#000;width:20px;text-align:center;'>4</span>
<span class="t" style='left:13.00px;top:583.00px;font:normal 13px/1 "Liberation Sans", sans-serif;color:#000;width:20px;text-align:center;'>5</span>
<span class="t" style='left:13.00px;top:600.00px;font:normal 13px/1 "Liberation Sans", sans-serif;color:#000;width:20px;text-align:center;'>6</span>
<span class="t" style='left:13.00px;top:617.00px;font:normal 13px/1 "Liberation Sans", sans-serif;color:#000;width:20px;text-align:center;'>7</span>
<span class="t" style='left:187.00px;top:430.75px;font:bold 6.5px/1 "Liberation Sans", sans-serif;color:#444;transform:scaleX(0.9643);'>ABC</span>
<span class="t" style='left:421.83px;top:431.30px;font:normal 13px/1 "Liberation Serif", serif;color:#222;transform:scaleX(1.6667);'>Σ</span>
<span class="t" style='left:456.30px;top:430.05px;font:bold 8.5px/1 "Liberation Serif", serif;color:#3048c0;transform:scaleX(1.2833);'>A</span>
<span class="t" style='left:456.80px;top:437.75px;font:bold 8.5px/1 "Liberation Serif", serif;color:#a83030;transform:scaleX(1.3600);'>Z</span>
<span class="t" style='left:479.20px;top:430.05px;font:bold 8.5px/1 "Liberation Serif", serif;color:#a83030;transform:scaleX(1.3600);'>Z</span>
<span class="t" style='left:478.80px;top:437.75px;font:bold 8.5px/1 "Liberation Serif", serif;color:#3048c0;transform:scaleX(1.3000);'>A</span>
<span class="t" style='left:616.70px;top:430.50px;font:bold 11px/1 "Liberation Sans", sans-serif;color:#2838b0;transform:scaleX(1.3000);'>?</span>
<span class="t" style='left:822.60px;top:428.50px;font:bold 15px/1 "Liberation Serif", serif;color:#3848b8;transform:scaleX(1.1273);'>A</span>
<span class="t" style='left:883.40px;top:427.50px;font:bold 11px/1 "Liberation Sans", sans-serif;color:#000;transform:scaleX(1.6000);'>»</span>
<span class="t" style='left:170.50px;top:482.50px;font:bold 9px/1 "Liberation Sans", sans-serif;color:#000;transform:scaleX(1.0000);font-style:italic;'>x</span>
</div>
</div></body></html>
